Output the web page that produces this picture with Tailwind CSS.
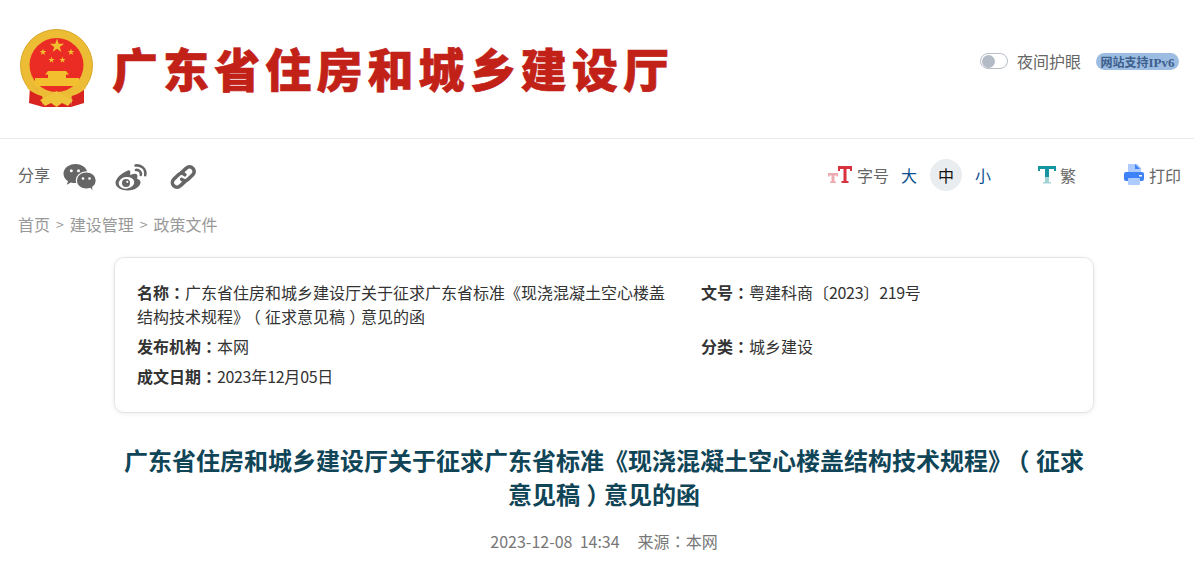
<!DOCTYPE html>
<html lang="zh-CN">
<head>
  <meta charset="UTF-8" />
  <meta name="viewport" content="width=device-width, initial-scale=1" />
  <title>广东省住房和城乡建设厅</title>
  <script src="https://cdn.jsdelivr.net/npm/@tailwindcss/browser@4"></script>
</head>
<body class="bg-white text-[#333] font-['Noto_Sans_CJK_SC','Noto_Sans',sans-serif] [text-spacing-trim:space-all] overflow-hidden">
  <!-- Header -->
  <header class="h-[139px] border-b border-[#e8e8e8] flex items-start justify-between">
    <div class="flex items-center pl-[18px] pt-[28px]">
      <svg class="w-[76px] h-[80px]" viewBox="0 0 76 80">
        <defs>
          <polygon id="star" points="0,-1 .225,-.31 .951,-.31 .363,.118 .588,.809 0,.382 -.588,.809 -.363,.118 -.951,-.31 -.225,-.31"/>
        </defs>
        <circle cx="38.500" cy="37.500" r="36" fill="#ecbc35" stroke="#d8a526" stroke-width="1"/>
        <circle cx="38.500" cy="37" r="27" fill="#ea2c25"/>
        <g fill="#f2bf2e">
          <use href="#star" transform="translate(39 18) scale(7.500)"/>
          <use href="#star" transform="translate(25 24) scale(3.600)"/>
          <use href="#star" transform="translate(53 24) scale(3.600)"/>
          <use href="#star" transform="translate(33.500 32) scale(3.400)"/>
          <use href="#star" transform="translate(44.500 32) scale(3.400)"/>
          <path d="M30 43 h18 l3 3.500 h-3 v3.500 h-18 v-3.500 h-3 z"/>
          <rect x="17" y="50" width="44" height="8"/>
        </g>
        <path d="M25 71 h28 v8 h-28 z" fill="#d8231f"/>
        <path d="M12 57 L 24 65 L 25 79 L 11 75 Z" fill="#d8231f"/>
        <path d="M66 57 L 54 65 L 53 79 L 66 75 Z" fill="#d8231f"/>
        <path d="M12 56 C 20 64 30 66 38.500 66 C 47 66 57 64 65 56 L 68 60 C 60 68 48 70 38.500 70 C 29 70 18 68 9 60 Z" fill="#ecbc35"/>
        <path d="M22 72 L 32 67 L 38.500 63 L 45 67 L 55 72 L 50 78 L 44 75 L 38.500 79 L 33 75 L 27 78 Z" fill="#efc43a"/>
      </svg>
      <div class="ml-[18px] mt-[-2px] text-[46px] leading-[60px] font-black tracking-[5.1px] [-webkit-text-stroke:0.6px_#c22118] text-[#c22118] whitespace-nowrap">广东省住房和城乡建设厅</div>
    </div>
    <div class="flex items-center pt-[49px] pr-[15px]">
      <span class="w-[28px] h-[16px] rounded-full border border-[#b8bec8] flex items-center pl-[1px]">
        <span class="w-[13px] h-[13px] rounded-full bg-[#b3bbc6]"></span>
      </span>
      <span class="ml-[9px] text-[16px] leading-[24px] text-[#666]">夜间护眼</span>
      <span class="ml-[15px] h-[17px] px-[4.500px] rounded-full bg-[#9cbce2] text-[12px] leading-[17px] font-bold text-[#3d5f8c] whitespace-nowrap">网站支持<span class="font-['Liberation_Serif'] text-[13px]">IPv6</span></span>
    </div>
  </header>

  <!-- Share and font tools -->
  <div class="h-[74px] flex items-center justify-between pl-[18px] pr-[13px]">
    <div class="flex items-center mt-[1px]">
      <span class="mb-[5px] text-[16px] leading-[20px] text-[#666]">分享</span>
      <svg class="ml-[13px] w-[33px] h-[28px]" viewBox="0 0 33 28" fill="#666">
        <path d="M12.500 1 C 5.800 1 .500 5.300 .500 10.800 C .500 14 2.300 16.500 5 18.200 L 3.800 21.800 L 8 19.500 C 9.500 19.900 11 20.100 12.500 20.100 C 18 20.100 24.500 16 24.500 10.800 C 24.500 5.300 19.200 1 12.500 1 Z"/>
        <ellipse cx="23.300" cy="17.500" rx="10" ry="8.700" stroke="#fff" stroke-width="1.200"/>
        <path d="M27 24 L 29.500 27.500 L 28.800 22.800 Z"/>
        <circle cx="8.300" cy="7.800" r="1.500" fill="#fff"/><circle cx="15.500" cy="7.800" r="1.500" fill="#fff"/>
        <circle cx="20" cy="15.500" r="1.300" fill="#fff"/><circle cx="26.500" cy="15.500" r="1.300" fill="#fff"/>
      </svg>
      <svg class="ml-[19px] w-[33px] h-[28px]" viewBox="0 0 33 28">
        <path d="M13 7.500 C 7 9.500 .500 15.500 .500 20 C .500 24.500 6.500 27.500 12.500 27.500 C 20.500 27.500 25.500 23 25.500 19.500 C 25.500 17.500 24 16.300 22 15.800 C 23 13 22.500 11 20.500 10.800 C 18.500 10.600 16 11.800 15 12 C 15.800 9 15.300 6.800 13 7.500 Z" fill="#666"/>
        <ellipse cx="11.500" cy="19.800" rx="7.800" ry="5.800" fill="#fff" transform="rotate(-8 11.500 19.800)"/>
        <circle cx="11" cy="20" r="4" fill="#666"/><circle cx="12.300" cy="18.800" r="1.100" fill="#fff"/>
        <path d="M20.500 2.500 C 26 1.500 31.500 6 30.200 12.300 M 21 7 C 23.800 6.500 26.500 9 25.800 12" fill="none" stroke="#666" stroke-width="2.600" stroke-linecap="round"/>
      </svg>
      <svg class="ml-[22px] w-[27px] h-[26px]" viewBox="0 0 29 28" fill="none" stroke="#666" stroke-width="3.800" stroke-linecap="round" stroke-linejoin="round">
        <path d="M12 9.500 L 17.500 4.500 C 19.500 2.500 22.500 2.500 24.500 4.500 C 26.500 6.500 26.500 9.500 24.500 11.500 L 19.500 16.500 C 17.500 18.500 14.500 18.500 12.500 16.500"/>
        <path d="M16.500 18.500 L 11 23.500 C 9 25.500 6 25.500 4 23.500 C 2 21.500 2 18.500 4 16.500 L 9 11.500 C 11 9.500 14 9.500 16 11.500"/>
      </svg>
    </div>
    <div class="flex items-center -mt-[2px]">
      <!-- font size -->
      <svg class="w-[24px] h-[20px]" viewBox="0 0 24 20">
        <path d="M0 8 h10 v3.500 h-1.500 v-1 h-2 v6 h1.500 v1.500 h-6 v-1.500 h1.500 v-6 h-2 v1 h-1.500 z" fill="#eeaab0"/>
        <path d="M10 1 h14 v5 h-2 v-2 h-3.500 v12 h2 v2 h-7 v-2 h2 v-12 h-3.500 v2 h-2 z" fill="#d7303f"/>
      </svg>
      <span class="ml-[5px] text-[16px] leading-[20px] text-[#666]">字号</span>
      <span class="ml-[12px] text-[16px] leading-[20px] text-[#0c4f8f]">大</span>
      <span class="ml-[13px] w-[32px] h-[32px] rounded-full bg-[#e9edf0] text-[16px] leading-[32px] text-center text-[#111]">中</span>
      <span class="ml-[13px] text-[16px] leading-[20px] text-[#0c4f8f]">小</span>
      <svg class="ml-[47px] w-[18px] h-[20px]" viewBox="0 0 18 20">
        <path d="M0 1 h18 v5 h-2 v-2 h-5 v8 h-4 v-8 h-5 v2 h-2 z" fill="#14959f"/>
        <path d="M7 12 h4 v5 h2 v1.500 h-8 v-1.500 h2 z" fill="#a3d3d6"/>
      </svg>
      <span class="ml-[4px] text-[16px] leading-[20px] text-[#666]">繁</span>
      <svg class="ml-[48px] w-[20px] h-[22px]" viewBox="0 0 20 22">
        <path d="M4 0 h9 l4 4 v6 h-13 z" fill="#aecbfd"/>
        <path d="M11 0 l5 5 h-5 z" fill="#3d83f7"/>
        <path d="M2 8 h16 a2 2 0 0 1 2 2 v5 a2 2 0 0 1 -2 2 h-16 a2 2 0 0 1 -2 -2 v-5 a2 2 0 0 1 2 -2 z" fill="#3d83f7"/>
        <rect x="4" y="14" width="12" height="7" rx="1" fill="#aecbfd"/>
        <rect x="15" y="11" width="3" height="1.500" fill="#fff"/>
      </svg>
      <span class="ml-[5px] text-[16px] leading-[20px] text-[#666]">打印</span>
    </div>
  </div>

  <!-- Breadcrumb -->
  <nav class="-mt-[1px] pl-[18px] h-[24px] flex items-center text-[16px] leading-[24px] text-[#999]">
    <span>首页</span><span class="mx-[6px] text-[14px]">&gt;</span><span>建设管理</span><span class="mx-[6px] text-[14px]">&gt;</span><span>政策文件</span>
  </nav>

  <main class="ml-[114px] w-[980px]">
    <!-- Document info card -->
    <section class="mt-[21px] h-[156px] rounded-[10px] border border-[#e4e4e4] shadow-[0_1px_4px_rgba(0,0,0,0.08)] pl-[22px] pt-[22px] grid grid-cols-[564px_1fr] content-start text-[16px] leading-[24px] text-[#333]">
      <p class="w-[535px]"><b>名称</b><b lang="zh-TW" class="font-['Noto_Sans_CJK_TC']">：</b>广东省住房和城乡建设厅关于征求广东省标准《现浇混凝土空心楼盖结构技术规程》<span class="inline-block -translate-x-[0.27em]">（</span>征求意见稿<span class="inline-block translate-x-[0.27em]">）</span>意见的函</p>
      <p><b>文号</b><b lang="zh-TW" class="font-['Noto_Sans_CJK_TC']">：</b>粤建科商〔<span class="tracking-[-0.35px]">2023</span>〕<span class="tracking-[-0.35px]">219</span>号</p>
      <p class="mt-[6px]"><b>发布机构</b><b lang="zh-TW" class="font-['Noto_Sans_CJK_TC']">：</b>本网</p>
      <p class="mt-[6px]"><b>分类</b><b lang="zh-TW" class="font-['Noto_Sans_CJK_TC']">：</b>城乡建设</p>
      <p class="mt-[6px] col-span-2"><b>成文日期</b><b lang="zh-TW" class="font-['Noto_Sans_CJK_TC']">：</b><span class="tracking-[-0.35px]">2023</span>年<span class="tracking-[-0.35px]">12</span>月<span class="tracking-[-0.35px]">05</span>日</p>
    </section>

    <!-- Article title -->
    <h1 class="mt-[30px] text-center text-[24px] leading-[34px] font-bold text-[#0f4557]">广东省住房和城乡建设厅关于征求广东省标准《现浇混凝土空心楼盖结构技术规程》<span class="inline-block -translate-x-[0.27em]">（</span>征求意见稿<span class="inline-block translate-x-[0.27em]">）</span>意见的函</h1>
    <div class="mt-[18px] flex justify-center text-[16px] leading-[24px] text-[#777]">
      <span>2023-12-08&nbsp;&nbsp;14:34</span><span class="ml-[18px]">来源<span lang="zh-TW" class="font-['Noto_Sans_CJK_TC']">：</span>本网</span>
    </div>
  </main>
</body>
</html>
